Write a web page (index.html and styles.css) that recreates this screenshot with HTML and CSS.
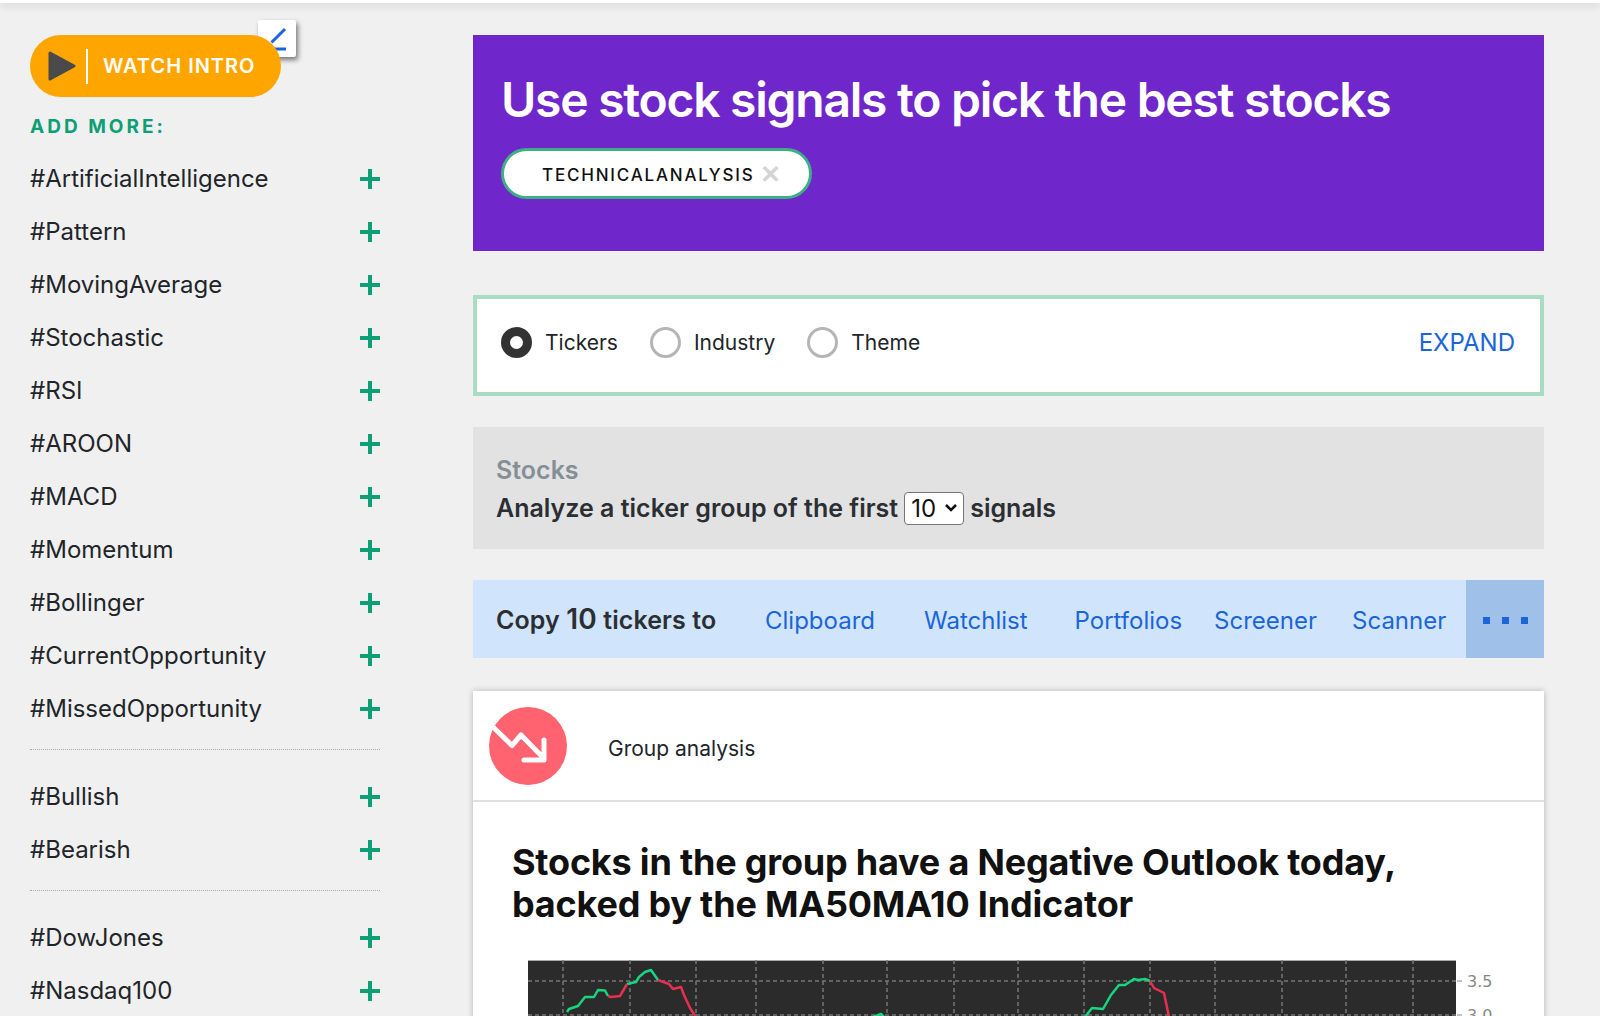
FILE: index.html
```html
<!DOCTYPE html>
<html lang="en">
  <head>
    <meta charset="UTF-8" />
    <meta name="viewport" content="width=device-width, initial-scale=1.0" />
    <title>Stock signals</title>
    <link rel="stylesheet" href="styles.css">
  </head>
  <body>
    <div class="topbar"></div>
    <div class="page">
      <aside class="sidebar">
        <div class="intro">
          <button type="button" class="edit-btn">
            <svg width="38" height="37" viewBox="0 0 38 37"><path d="M27 9 13.5 22.5M12 29h16" fill="none" stroke="#1a66d9" stroke-width="3"/></svg>
          </button>
          <button type="button" class="watch-btn">
            <svg class="play" width="28" height="30" viewBox="0 0 28 30"><path d="M2 2 26 15 2 28Z" fill="#4a4a4a" stroke="#4a4a4a" stroke-width="3" stroke-linejoin="round"/></svg>
            <span class="watch-sep"></span>
            <span>WATCH INTRO</span>
          </button>
        </div>
        <div class="add-title">ADD MORE:</div>
        <ul class="tags">
          <li>#ArtificialIntelligence<span class="plus"></span></li>
          <li>#Pattern<span class="plus"></span></li>
          <li>#MovingAverage<span class="plus"></span></li>
          <li>#Stochastic<span class="plus"></span></li>
          <li>#RSI<span class="plus"></span></li>
          <li>#AROON<span class="plus"></span></li>
          <li>#MACD<span class="plus"></span></li>
          <li>#Momentum<span class="plus"></span></li>
          <li>#Bollinger<span class="plus"></span></li>
          <li>#CurrentOpportunity<span class="plus"></span></li>
          <li>#MissedOpportunity<span class="plus"></span></li>
        </ul>
        <div class="tag-sep"></div>
        <ul class="tags">
          <li>#Bullish<span class="plus"></span></li>
          <li>#Bearish<span class="plus"></span></li>
        </ul>
        <div class="tag-sep"></div>
        <ul class="tags">
          <li>#DowJones<span class="plus"></span></li>
          <li>#Nasdaq100<span class="plus"></span></li>
        </ul>
      </aside>

      <main class="main">
        <section class="hero">
          <h1>Use stock signals to pick the best stocks</h1>
          <div class="chip">TECHNICALANALYSIS<span class="chip-x">✕</span></div>
        </section>

        <section class="picker">
          <label class="radio"><input type="radio" name="kind" checked />Tickers</label>
          <label class="radio"><input type="radio" name="kind" />Industry</label>
          <label class="radio"><input type="radio" name="kind" />Theme</label>
          <a class="expand">EXPAND</a>
        </section>

        <section class="group-box">
          <div class="group-label">Stocks</div>
          <div class="group-line">
            Analyze a ticker group of the first
            <select class="group-select"><option>10</option></select>
            signals
          </div>
        </section>

        <section class="copy-bar">
          <div class="copy-label">Copy <span class="copy-num">10</span> tickers to</div>
          <a class="copy-link clipboard">Clipboard</a>
          <a class="copy-link watchlist">Watchlist</a>
          <a class="copy-link portfolios">Portfolios</a>
          <a class="copy-link screener">Screener</a>
          <a class="copy-link scanner">Scanner</a>
          <div class="copy-more"><i></i><i></i><i></i></div>
        </section>

        <section class="card">
          <div class="card-head">
            <svg class="trend" width="78" height="78" viewBox="0 0 78 78">
              <circle cx="39" cy="39" r="39" fill="#ff6370"/>
              <path d="M5 21 23 38.500 32 28 55 51.500M55 33V53H35" fill="none" stroke="#fff" stroke-width="5" stroke-linecap="round" stroke-linejoin="round"/>
            </svg>
            <span class="card-title">Group analysis</span>
          </div>
          <div class="card-body">
            <h2>Stocks in the group have a Negative Outlook today, backed by the MA50MA10 Indicator</h2>
            <svg class="chart" width="1000" height="70" viewBox="0 0 1000 70">
              <rect x="0" y="0" width="928" height="70" fill="#2b2b2b"/>
              <path d="M0 .5H928" stroke="#aaa" fill="none"/>
              <g class="grid">
                <path d="M35 0V70M102 0V70M168 0V70M228 0V70M295 0V70M359 0V70M426 0V70M490 0V70M556 0V70M622 0V70M687 0V70M754 0V70M818 0V70M885 0V70M0 21H928M0 55H928"/>
              </g>
              <g class="line up">
                <path d="M39 52 41 49 50 46 57 37 66 37 70 30 77 30.500 80 36"/>
                <path d="M99 24 108 22 111 17 117 12 123 10 130 20"/>
                <path d="M345 57 353 54 356 57"/>
                <path d="M557 57 564 48 575 49 583 35 591 25 597 25 606 19 610 20 617 19 622 21"/>
              </g>
              <g class="line down">
                <path d="M80 36 83 37 92 36 99 24"/>
                <path d="M130 20 141 24 145 29 153 27 156 35 162 48 168 57"/>
                <path d="M622 21 626 28 636 33 641 57"/>
              </g>
              <path d="M929 21H934M929 55H934" stroke="#888" fill="none"/>
              <text class="tick" x="939" y="27">3.5</text>
              <text class="tick" x="939" y="61">3.0</text>
            </svg>
          </div>
        </section>
      </main>
    </div>
  </body>
</html>
```

FILE: styles.css
```css
html,
body {
  height: 1016px;
  overflow: hidden;
}
body {
  margin: 0;
  background-color: #f0f0f0;
  color: #212529;
  font-family: Inter, "Liberation Sans", sans-serif;
}
ul {
  list-style: none;
  margin: 0;
  padding: 0;
}
a {
  cursor: pointer;
}
.topbar {
  height: 3px;
  background-color: #fff;
  box-shadow: 0 2px 8px rgba(0, 0, 0, 0.2);
}
.page {
  display: flex;
  align-items: flex-start;
  padding: 32px 56px 0 30px;
}

/* left column */
.sidebar {
  width: 350px;
  margin-right: 93px;
  flex-shrink: 0;
}
.intro {
  position: relative;
}
.edit-btn {
  position: absolute;
  left: 228px;
  top: -15px;
  width: 38px;
  height: 37px;
  padding: 0;
  border: none;
  border-radius: 2px;
  background-color: #fff;
  box-shadow: 2px 3px 5px rgba(0, 0, 0, 0.5);
}
.edit-btn svg {
  display: block;
}
.watch-btn {
  position: relative;
  display: flex;
  align-items: center;
  width: 251px;
  height: 62px;
  padding: 0 0 0 18px;
  border: none;
  border-radius: 32px;
  background-color: #ffa500;
  color: #fff;
  font-family: inherit;
  font-size: 20px;
  font-weight: 600;
  letter-spacing: 1px;
}
.watch-sep {
  width: 2px;
  height: 35px;
  margin: 0 15px 0 10px;
  background-color: #fff;
}
.add-title {
  margin-top: 19px;
  height: 22px;
  line-height: 22px;
  color: #0d9f76;
  font-size: 19px;
  font-weight: 700;
  letter-spacing: 3px;
}
.tags {
  font-size: 24px;
}
.tags li {
  display: flex;
  align-items: center;
  justify-content: space-between;
  height: 53px;
}
.add-title + .tags {
  margin-top: 14px;
}
.plus {
  position: relative;
  width: 20px;
  height: 20px;
  background:
    linear-gradient(#0d9f76, #0d9f76) center / 100% 4px no-repeat,
    linear-gradient(#0d9f76, #0d9f76) center / 4px 100% no-repeat;
}
.tag-sep {
  margin: 14px 0 20px;
  border-top: 1px dotted #aaa;
}

/* right column */
.main {
  width: 1071px;
  flex-shrink: 0;
}
.hero {
  height: 216px;
  padding: 34px 28px 0;
  box-sizing: border-box;
  background-color: #6f27cc;
}
.hero h1 {
  margin: 0;
  color: #fff;
  font-size: 48px;
  font-weight: 600;
  line-height: 62px;
  letter-spacing: -1.25px;
}
.chip {
  display: inline-flex;
  align-items: center;
  height: 51px;
  margin-top: 17px;
  padding: 2px 26px 0 38px;
  box-sizing: border-box;
  border: 3px solid #3dae85;
  border-radius: 26px;
  background-color: #fff;
  color: #111;
  font-size: 17px;
  font-weight: 500;
  letter-spacing: 1.8px;
}
.chip-x {
  margin-left: 6px;
  color: #d4d4d4;
  font-size: 25px;
  font-weight: 700;
  line-height: 1;
}
.picker {
  display: flex;
  align-items: center;
  height: 101px;
  margin-top: 44px;
  padding: 0 25px 6px 24px;
  box-sizing: border-box;
  border: 4px solid #a8dcc5;
  background-color: #fff;
  font-size: 21px;
}
.radio {
  display: flex;
  align-items: center;
  margin-right: 32px;
}
.radio input {
  appearance: none;
  width: 31px;
  height: 31px;
  margin: 0 13px 0 0;
  box-sizing: border-box;
  border: 3px solid #b5b5b5;
  border-radius: 50%;
  background-color: #fff;
}
.radio input:checked {
  border: 9.500px solid #333;
}
.expand {
  margin-left: auto;
  color: #1a66d9;
  font-size: 24px;
}
.group-box {
  height: 122px;
  margin-top: 31px;
  padding: 24px 23px 0;
  box-sizing: border-box;
  background-color: #e2e2e2;
  font-size: 25px;
  font-weight: 600;
  line-height: 38px;
}
.group-label {
  color: #868e96;
}
.group-line {
  display: flex;
  align-items: center;
  gap: 6px;
  color: #2b2f33;
}
.group-select {
  appearance: none;
  width: 60px;
  height: 33px;
  padding: 0 0 0 6px;
  border: 1px solid #767676;
  border-radius: 4px;
  background: #fff url("data:image/svg+xml,%3Csvg xmlns='http://www.w3.org/2000/svg' width='14' height='10'%3E%3Cpath d='M2 2l5 5 5-5' fill='none' stroke='%23111' stroke-width='2.500'/%3E%3C/svg%3E") no-repeat right 5px center;
  color: #111;
  font-family: inherit;
  font-size: 24px;
  font-weight: 400;
}
.copy-bar {
  display: flex;
  align-items: center;
  height: 78px;
  margin-top: 31px;
  padding-left: 23px;
  background-color: #d0e4fc;
  font-size: 24px;
}
.copy-label {
  width: 269px;
  flex-shrink: 0;
  font-size: 25px;
  font-weight: 600;
  letter-spacing: 0.1px;
  color: #2b2f33;
}
.copy-num {
  font-size: 28px;
}
.copy-link {
  margin-top: 2px;
  color: #1a66d9;
}
.watchlist {
  margin-left: 49px;
}
.portfolios {
  margin-left: 47px;
}
.screener {
  margin-left: 32px;
}
.scanner {
  margin-left: 35px;
}
.copy-more {
  display: flex;
  align-items: center;
  justify-content: center;
  gap: 12px;
  align-self: stretch;
  width: 78px;
  margin-left: auto;
  padding-top: 2px;
  box-sizing: border-box;
  background-color: #9fc1e9;
}
.copy-more i {
  width: 7px;
  height: 7px;
  background-color: #1a66d9;
}
.card {
  height: 400px;
  margin-top: 33px;
  background-color: #fff;
  box-shadow: 0 0 6px rgba(0, 0, 0, 0.25);
}
.card-head {
  display: flex;
  align-items: center;
  height: 111px;
  padding: 0 0 0 16px;
  box-sizing: border-box;
  border-bottom: 2px solid #e0e0e0;
}
.card-title {
  margin: 6px 0 0 41px;
  font-size: 21px;
}
.card-body {
  padding: 39px 39px 0;
}
.card-body h2 {
  width: 960px;
  margin: 0;
  color: #111;
  font-size: 36px;
  font-weight: 700;
  line-height: 42px;
  letter-spacing: -0.2px;
}
.chart {
  display: block;
  margin: 35px 0 0 16px;
}
.grid path {
  fill: none;
  stroke: #777;
  stroke-width: 1.5;
  stroke-dasharray: 4 3;
}
.line path {
  fill: none;
  stroke-width: 2.5;
  stroke-linejoin: round;
}
.up path {
  stroke: #17d67f;
}
.down path {
  stroke: #e6304f;
}
.tick {
  fill: #888;
  font-family: "DejaVu Sans", sans-serif;
  font-size: 16px;
}
```
